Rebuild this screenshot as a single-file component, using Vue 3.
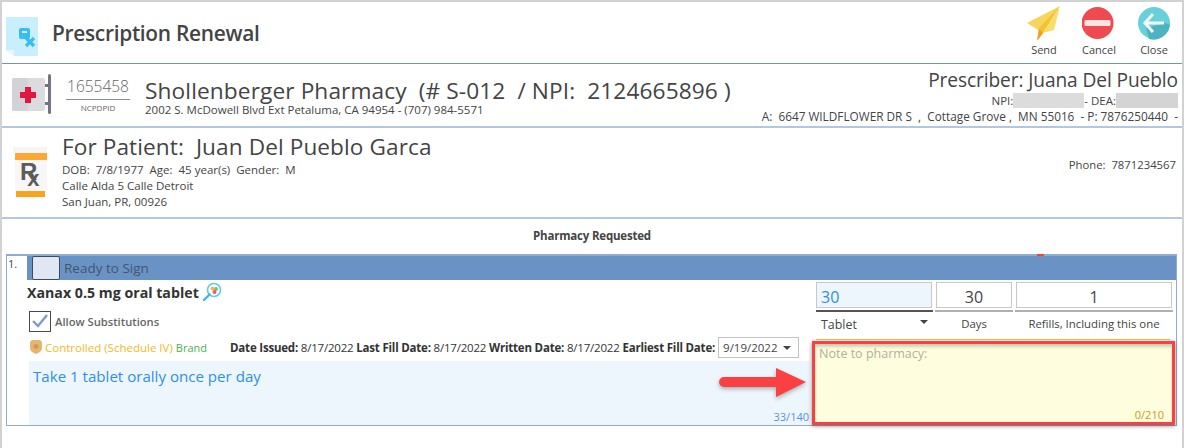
<template>
  <div class="screen">
    <header class="topbar">
      <svg class="doc_icon" width="32" height="39" viewBox="0 0 32 39">
        <path d="M1 0H31a1 1 0 0 1 1 1V38a1 1 0 0 1-1 1H8L0 33V1a1 1 0 0 1 1-1z" fill="#c9efff" />
        <path d="M0 33L8 33V39z" fill="#e6f7fd" />
        <rect x="13" y="11" width="11" height="11" rx="2" fill="#3bbdee" />
        <rect x="16" y="14" width="5" height="2" fill="#c9efff" />
        <path d="M20 21L28 29M28 21L20 29" stroke="#3bbdee" stroke-width="3.200" />
      </svg>
      <h1>Prescription Renewal</h1>
      <div class="actions">
        <div v-for="action in actions" :key="action.label" class="action">
          <svg width="34" height="34" viewBox="0 0 34 34" v-html="action.icon"></svg>
          <span>{{ action.label }}</span>
        </div>
      </div>
    </header>

    <section class="pharmacy">
      <svg class="pharm_icon" width="42" height="42" viewBox="0 0 42 42">
        <rect x="0" y="4" width="33" height="33" rx="2" fill="#dcdce0" />
        <rect x="0" y="4" width="16" height="33" rx="2" fill="#d3d3d7" />
        <path d="M13 13h6v5h5v6h-5v5h-6v-5H8v-6h5z" fill="#e3173e" />
        <rect x="36" y="0" width="3" height="40" rx="1.5" fill="#74747e" />
        <rect x="33" y="10" width="4" height="3" fill="#74747e" />
        <rect x="33" y="28" width="4" height="3" fill="#74747e" />
      </svg>
      <div class="ncpdp">
        <div class="ncpdp_num">1655458</div>
        <div class="ncpdp_label">NCPDPID</div>
      </div>
      <div class="pharm_text">
        <div class="pharm_name">Shollenberger Pharmacy&nbsp; (# S-012&nbsp; / NPI:&nbsp; 2124665896 )</div>
        <div class="small">2002 S. McDowell Blvd Ext Petaluma, CA 94954 - (707) 984-5571</div>
      </div>
      <div class="prescriber">
        <div class="presc_name">Prescriber: Juana Del Pueblo</div>
        <div class="small presc_ids">NPI:<span class="blur blur_npi"></span>- DEA:<span class="blur blur_dea"></span></div>
        <div class="small presc_addr">A:&nbsp; 6647 WILDFLOWER DR S&nbsp; ,&nbsp; Cottage Grove ,&nbsp; MN 55016&nbsp; - P: 7876250440&nbsp; -</div>
      </div>
    </section>

    <section class="patient">
      <svg class="rx_icon" width="34" height="50" viewBox="0 0 34 50">
        <rect x="0" y="0" width="34" height="6" fill="#f5f5f5" />
        <rect x="2" y="6" width="32" height="7" fill="#ffa733" />
        <rect x="2" y="13" width="32" height="31" fill="#f7f7f7" />
        <rect x="3" y="44" width="29" height="6" fill="#fba31f" />
        <text x="7" y="33" class="rx_mark">R<tspan class="rx_sub" dx="-10" dy="6">x</tspan></text>
      </svg>
      <div class="patient_text">
        <div class="patient_name">For Patient:&nbsp; Juan Del Pueblo Garca</div>
        <div class="small line">DOB:&nbsp; 7/8/1977&nbsp; Age:&nbsp; 45 year(s)&nbsp; Gender:&nbsp; M</div>
        <div class="small line">Calle Alda 5 Calle Detroit</div>
        <div class="small line">San Juan, PR, 00926</div>
      </div>
      <div class="phone small">Phone:&nbsp; 7871234567</div>
    </section>

    <div class="requested">Pharmacy Requested</div>

    <section class="card">
      <div class="card_num">1.</div>
      <div class="card_body">
        <div class="sign_bar">
          <span class="sign_box"></span>
          <span>Ready to Sign</span>
          <span class="red_tick"></span>
        </div>
        <div class="columns">
          <div class="left_col">
            <div class="drug_name">
              Xanax 0.5 mg oral tablet
              <svg width="20" height="20" viewBox="0 0 20 20">
                <circle cx="12" cy="8" r="6.5" fill="#fff" stroke="#5ccbec" stroke-width="1.6" />
                <path d="M7.500 12.500L2 18" stroke="#3fb4e0" stroke-width="2.400" stroke-linecap="round" />
                <circle cx="10.500" cy="6.500" r="2" fill="#f5b93f" />
                <circle cx="14" cy="7" r="2" fill="#7cc36b" />
                <circle cx="12.500" cy="10" r="2" fill="#e95a6a" />
              </svg>
            </div>
            <div class="allow">
              <span class="check">
                <svg width="16" height="14" viewBox="0 0 16 14">
                  <path d="M1 7l5 5L15 1" fill="none" stroke="#7d9cc9" stroke-width="2.400" />
                </svg>
              </span>
              <span>Allow Substitutions</span>
            </div>
            <div class="meta">
              <svg width="12" height="14" viewBox="0 0 12 14">
                <path d="M2 0H10L12 2V8C12 11 9 13 6 14 3 13 0 11 0 8V2z" fill="#e6b56e" />
                <circle cx="6" cy="6.500" r="2.500" fill="#cf9a52" />
              </svg>
              <span class="controlled">Controlled (Schedule IV)</span>
              <span class="brand">Brand</span>
              <span class="dates">
                <b>Date Issued:</b> 8/17/2022
                <b>Last Fill Date:</b> 8/17/2022
                <b>Written Date:</b> 8/17/2022
                <b>Earliest Fill Date:</b>
              </span>
              <span class="date_select">9/19/2022<i class="caret"></i></span>
            </div>
            <div class="sig">
              <span>Take 1 tablet orally once per day</span>
              <span class="sig_count">33/140</span>
            </div>
          </div>
          <div class="right_col">
            <div class="qty_row">
              <div class="qty qty_main">
                <div class="qty_box">30</div>
                <div class="qty_label tablet">Tablet<i class="caret"></i></div>
              </div>
              <div class="qty qty_days">
                <div class="qty_box">30</div>
                <div class="qty_label">Days</div>
              </div>
              <div class="qty qty_refill">
                <div class="qty_box">1</div>
                <div class="qty_label">Refills, Including this one</div>
              </div>
            </div>
            <div class="note_rule"></div>
            <div class="note">
              <span>Note to pharmacy:</span>
              <span class="note_count">0/210</span>
            </div>
          </div>
        </div>
      </div>
      <svg class="arrow" width="90" height="34" viewBox="0 0 90 34">
        <path d="M5 9H57V0L87 14 57 29V19H5a5 5 0 0 1 0-10z" fill="#f94144" />
      </svg>
    </section>
  </div>
</template>

<script setup>
const actions = [
  {
    label: 'Send',
    icon: '<path d="M0 17L33 0 13 25z" fill="#f7d45c"/><path d="M33 0L12 22l-2 13 6-8z" fill="#f4c430"/><path d="M33 0L16 27l11-3z" fill="#f9dc6e"/><path d="M10 35l2-12 4 4z" fill="#f0a020"/>',
  },
  {
    label: 'Cancel',
    icon: '<circle cx="15.500" cy="17" r="16" fill="#ee4a50"/><rect x="2.500" y="14" width="26" height="6" rx="1.500" fill="#f6e4e4"/>',
  },
  {
    label: 'Close',
    icon: '<circle cx="17" cy="17" r="16" fill="#68d0da"/><path d="M29 28a16 16 0 0 1-17 5L9 22l19-5 5 2a16 16 0 0 1-4 9z" fill="#4db3c0"/><path d="M16 8l-8 9 8 9M9 17h18" fill="none" stroke="#f3fbfc" stroke-width="3"/>',
  },
];
</script>

<style>
html,
body {
  margin: 0;
  background: #ffffff;
}
</style>

<style scoped>
* {
  box-sizing: border-box;
}
.screen {
  width: 1184px;
  height: 448px;
  overflow: hidden;
  border-top: 2px solid #d2d2d2;
  border-left: 2px solid #d2d2d2;
  border-right: 2px solid #d2d2d2;
  background: #ffffff;
  color: #444444;
  font-family: 'Open Sans', 'Noto Sans', sans-serif;
}
.small {
  font-size: 11.500px;
  line-height: 14px;
  white-space: nowrap;
}

/* header */
.topbar {
  height: 62px;
  display: flex;
  align-items: center;
  padding: 4px 10px 6px 4px;
  border-bottom: 1px solid #6f94c2;
}
.doc_icon {
  flex: none;
  margin-top: 9px;
}
.topbar h1 {
  margin: 3px 0 0 14px;
  font-size: 20.900px;
  font-weight: 600;
  letter-spacing: -0.3px;
  color: #444444;
}
.actions {
  margin-left: auto;
  display: flex;
  gap: 19px;
}
.action {
  width: 36px;
  display: flex;
  flex-direction: column;
  align-items: center;
  gap: 3px;
  font-size: 11px;
  line-height: 14px;
}

/* 약국 */
.pharmacy {
  height: 64px;
  display: flex;
  align-items: center;
  padding: 0 4px 0 10px;
  border-bottom: 2px solid #b3c7e1;
}
.pharm_icon {
  flex: none;
}
.ncpdp {
  width: 64px;
  margin-left: 12px;
  text-align: center;
}
.ncpdp_num {
  height: 24px;
  font-size: 15.500px;
  font-weight: 300;
  line-height: 20px;
  border-bottom: 1px solid #8c8c8c;
  color: #666666;
}
.ncpdp_label {
  font-size: 8px;
  line-height: 15px;
  color: #666666;
}
.pharm_text {
  margin-left: 15px;
  padding-top: 5px;
}
.pharm_name {
  font-size: 22.700px;
  line-height: 24px;
  letter-spacing: 0.1px;
  white-space: nowrap;
}
.prescriber {
  margin-left: auto;
  text-align: right;
  margin-top: 2px;
}
.presc_name {
  font-size: 19.150px;
  line-height: 22px;
  letter-spacing: -0.1px;
}
.presc_ids {
  height: 15px;
  margin-top: 2px;
  line-height: 15px;
}
.presc_addr {
  margin-top: 1px;
  font-size: 11.800px;
  line-height: 15px;
}
.blur {
  display: inline-block;
  height: 15px;
  vertical-align: top;
  background: #dcdcdc;
}
.blur_npi {
  width: 71px;
}
.blur_dea {
  width: 62px;
  background: #d4d4d4;
}

/* 환자 */
.patient {
  height: 91px;
  display: flex;
  padding: 0 5px 0 11px;
  border-bottom: 2px solid #b3c7e1;
}
.rx_icon {
  flex: none;
  margin-top: 19px;
}
.rx_mark {
  font-family: 'Liberation Sans', sans-serif;
  font-size: 24px;
  font-weight: 700;
  fill: #5c5c5c;
}
.rx_sub {
  font-size: 22px;
}
.patient_text {
  margin-left: 15px;
}
.patient_name {
  padding-top: 3px;
  font-size: 22.600px;
  line-height: 31px;
  letter-spacing: 0.1px;
}
.line {
  line-height: 16px;
}
.phone {
  margin-left: auto;
  margin-top: 30px;
  padding-right: 1px;
  font-size: 11.300px;
}

/* 약국 요청 */
.requested {
  height: 33px;
  line-height: 33px;
  margin-bottom: 2px;
  text-align: center;
  font-size: 11.500px;
  font-weight: 700;
  letter-spacing: -0.2px;
}

/* 카드 */
.card {
  position: relative;
  width: 1171px;
  height: 172px;
  margin-left: 4px;
  display: flex;
  border: 1px solid #8fadd3;
  border-top-width: 2px;
}
.card_num {
  width: 20px;
  flex: none;
  padding: 1px 0 0 1px;
  font-size: 11px;
  line-height: 14px;
}
.card_body {
  flex: 1;
  min-width: 0;
  display: flex;
  flex-direction: column;
}
.sign_bar {
  position: relative;
  height: 24px;
  flex: none;
  display: flex;
  align-items: center;
  gap: 4px;
  background: #6a93c5;
  font-size: 13.500px;
  color: #45556b;
}
.sign_box {
  width: 28px;
  height: 24px;
  margin-left: 5px;
  background: #e0e7f2;
  border: 1px solid #3f4a5a;
  border-radius: 2px;
}
.red_tick {
  position: absolute;
  left: 1010px;
  top: -2px;
  width: 7px;
  height: 2px;
  background: #e9473f;
}
.columns {
  flex: 1;
  display: flex;
  min-height: 0;
}
.left_col {
  width: 789px;
  flex: none;
  display: flex;
  flex-direction: column;
}
.drug_name {
  display: flex;
  align-items: center;
  gap: 3px;
  height: 22px;
  margin-top: 1px;
  font-size: 14.200px;
  font-weight: 700;
  color: #333333;
}
.allow {
  display: flex;
  align-items: center;
  gap: 4px;
  height: 24px;
  margin-top: 6px;
  margin-left: 2px;
  font-size: 11.200px;
  font-weight: 600;
  color: #666666;
}
.check {
  width: 22px;
  height: 21px;
  display: flex;
  align-items: center;
  justify-content: center;
  border: 1px solid #4a4a4a;
}
.meta {
  display: flex;
  align-items: center;
  height: 24px;
  margin-top: 2px;
  margin-left: 3px;
  font-size: 11.500px;
  white-space: nowrap;
}
.controlled {
  margin-left: 3px;
  color: #f5b925;
}
.brand {
  margin-left: 3px;
  font-size: 11px;
  color: #4caf50;
}
.dates {
  margin-left: 23px;
  letter-spacing: -0.2px;
  color: #333333;
}
.date_select {
  position: relative;
  width: 81px;
  height: 21px;
  margin-left: 3px;
  padding-left: 4px;
  line-height: 19px;
  border: 1px solid #c4c4c4;
}
.caret {
  position: absolute;
  right: 7px;
  top: 8px;
  width: 0;
  height: 0;
  border-left: 4px solid transparent;
  border-right: 4px solid transparent;
  border-top: 4px solid #444444;
}
.sig {
  position: relative;
  flex: 1;
  margin: 2px 6px 0 2px;
  padding: 5px 0 0 4px;
  background: #eef6fd;
  color: #2d8fe8;
  font-size: 15.100px;
}
.sig_count {
  position: absolute;
  right: 1px;
  bottom: 1px;
  font-size: 11px;
  line-height: 14px;
  color: #5593e8;
}
.right_col {
  flex: 1;
  min-width: 0;
  display: flex;
  flex-direction: column;
  padding-top: 2px;
}
.qty_row {
  display: flex;
  gap: 2px;
}
.qty {
  flex: none;
  display: flex;
  flex-direction: column;
}
.qty_main {
  width: 117px;
}
.qty_days {
  width: 78px;
}
.qty_refill {
  width: 158px;
}
.qty_box {
  height: 26px;
  margin: 0 1px;
  border: 1px solid #c8c8c8;
  text-align: center;
  font-size: 16px;
  line-height: 28px;
}
.qty_label {
  height: 29px;
  margin-top: 2px;
  border-top: 2px solid #b0b0b0;
  text-align: center;
  font-size: 11.400px;
  line-height: 24px;
}
.qty_main .qty_box {
  margin-left: 0;
  background: #eef6fd;
  color: #2d8fe8;
  text-align: left;
  padding-left: 4px;
}
.tablet {
  position: relative;
  border-top-color: #555555;
  text-align: left;
  padding-left: 5px;
  font-size: 12.400px;
  line-height: 26px;
}
.tablet .caret {
  right: 5px;
}
.note_rule {
  flex: none;
  width: 354px;
  height: 1px;
  background: #f0c840;
}
.note {
  position: relative;
  flex: none;
  width: 363px;
  height: 84px;
  margin-left: -4px;
  margin-top: 1px;
  padding: 1px 4px;
  background: #fefede;
  border: 3px solid #f94144;
  box-shadow: 0 1px 4px rgba(0, 0, 0, 0.45), inset 0 3px 3px rgba(0, 0, 0, 0.18);
  font-size: 12.500px;
  color: #b0b0a0;
}
.note_count {
  position: absolute;
  right: 8px;
  bottom: 0;
  font-size: 11px;
  color: #cc9a14;
}
.arrow {
  position: absolute;
  left: 712px;
  top: 112px;
  filter: drop-shadow(0 2px 2px rgba(0, 0, 0, 0.3));
}
</style>
